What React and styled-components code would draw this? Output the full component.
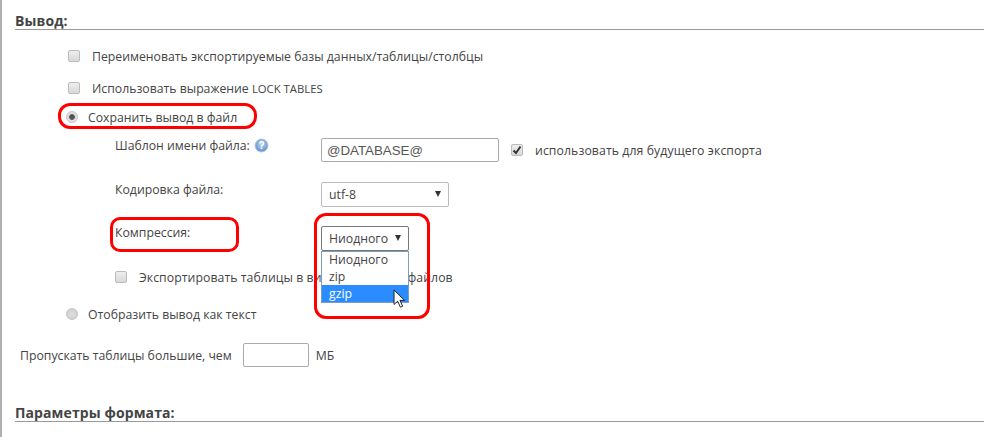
import React from "react";
import styled, { createGlobalStyle } from "styled-components";

const Global = createGlobalStyle`
  html, body { margin: 0; padding: 0; background: #fff; }
  body { font-family: "Open Sans", "Noto Sans", sans-serif; font-size: 12.25px; color: #444; }
`;

const Page = styled.div`
  position: relative;
  width: 1002px;
  height: 437px;
  box-sizing: border-box;
  overflow: hidden;
  border-left: 2px solid #b0b0b0;
  padding: 14px 18px 0 13px;
`;

const Heading = styled.h2`
  margin: ${(p) => p.$top || 0}px 0 ${(p) => p.$bottom || 0}px;
  height: 15px;
  font-size: 14px;
  line-height: 14px;
  font-weight: 700;
  color: #444;
  border-bottom: 1px solid #999;
  letter-spacing: 0.1px;
`;

const Row = styled.div`
  display: flex;
  align-items: center;
  height: ${(p) => p.$h}px;
  padding-left: ${(p) => p.$left}px;
  white-space: nowrap;
`;

const Check = styled.span`
  flex: none;
  width: 10px;
  height: 10px;
  border: 1px solid #bbb;
  border-radius: 2px;
  background: linear-gradient(#eee, #d8d8d8);
  display: inline-flex;
  align-items: center;
  justify-content: center;
  margin-left: ${(p) => p.$before || 0}px;
  margin-right: ${(p) => p.$gap}px;
`;

const Radio = styled.span`
  flex: none;
  width: 10px;
  height: 10px;
  border: 1px solid #c4c4c4;
  border-radius: 50%;
  background: radial-gradient(circle, ${(p) => (p.$on ? "#555 0, #555 2.5px, #e0e0e0 3.2px" : "#ddd 0, #ccc 100%")});
  margin-right: 10px;
`;

const Label = styled.span`
  flex: none;
  width: ${(p) => p.$w}px;
  display: flex;
  align-items: center;
  gap: 4px;
  transform: translateY(${(p) => p.$shift || 0}px);
`;

const Spaced = styled.span`
  letter-spacing: ${(p) => p.$s}px;
`;

const TextField = styled.div`
  box-sizing: border-box;
  width: ${(p) => p.$w}px;
  height: 24px;
  border: 1px solid #aaa;
  border-radius: 2px;
  background: #fff;
  padding: 0 5px;
  line-height: 23px;
  font-size: 13.3px;
  color: #555;
  font-family: "Liberation Sans", sans-serif;
`;

const SelectBox = styled.div`
  box-sizing: border-box;
  width: ${(p) => p.$w}px;
  height: 25px;
  border: 1px solid ${(p) => p.$border};
  border-radius: 2px;
  background: #fff;
  padding: 0 7px;
  display: flex;
  align-items: center;
  justify-content: space-between;
  font-size: 12.25px;
  color: #444;
`;

const Arrow = styled.span`
  width: 0;
  height: 0;
  border-left: 3.5px solid transparent;
  border-right: 3.5px solid transparent;
  border-top: 6px solid #333;
`;

const Menu = styled.div`
  position: absolute;
  left: 319px;
  top: 251px;
  width: 88px;
  height: 52px;
  box-sizing: border-box;
  border: 1px solid #7f9db9;
  background: #fff;
  z-index: 2;
`;

const MenuItem = styled.div`
  height: ${(p) => p.$h}px;
  line-height: ${(p) => p.$lh}px;
  padding-left: 7px;
  font-size: 12.25px;
  color: ${(p) => (p.$active ? "#fff" : "#444")};
  background: ${(p) => (p.$active ? "#2b8cff" : "#fff")};
`;

const Mark = styled.div`
  position: absolute;
  left: ${(p) => p.$x}px;
  top: ${(p) => p.$y}px;
  width: ${(p) => p.$w}px;
  height: ${(p) => p.$h}px;
  box-sizing: border-box;
  border: 3px solid #f00;
  border-radius: ${(p) => p.$r}px;
  z-index: 3;
`;

const Cursor = styled.svg`
  position: absolute;
  left: 391px;
  top: 289px;
  z-index: 4;
`;

const SmallCaps = styled.span`
  font-size: 11.3px;
`;

const SkipLabel = styled.span`
  margin-right: 11px;
`;

const Unit = styled.span`
  margin-left: 7px;
`;

const Help = () => (
  <svg width="15" height="15" viewBox="0 0 15 15">
    <defs>
      <radialGradient id="h" cx="50%" cy="40%" r="60%">
        <stop offset="0" stopColor="#c3d7f0" />
        <stop offset="1" stopColor="#5a8cc8" />
      </radialGradient>
    </defs>
    <circle cx="7.5" cy="7.5" r="6.5" fill="url(#h)" stroke="#b4c8e0" />
    <text x="7.5" y="11" fontSize="10" fontWeight="700" textAnchor="middle" fill="#fff" fontFamily="Liberation Sans">?</text>
  </svg>
);

export default function App() {
  return (
    <>
      <Global />
      <Page>
        <Heading $bottom={13}>Вывод:</Heading>
        <Row $h={26} $left={53}>
          <Check $gap={12} />
          Переименовать экспортируемые базы данных/таблицы/столбцы
        </Row>
        <Row $h={38} $left={53}>
          <Check $gap={12} />
          <span>Использовать выражение <SmallCaps>LOCK TABLES</SmallCaps></span>
        </Row>
        <Row $h={20} $left={51}>
          <Radio $on />
          Сохранить вывод в файл
        </Row>
        <Row $h={46} $left={100}>
          <Label $w={206} $shift={-5}>Шаблон имени файла: <Help /></Label>
          <TextField $w={178}>@DATABASE@</TextField>
          <Check $before={12} $gap={12}>
            <svg width="10" height="10" viewBox="0 0 10 10"><path d="M1.5 5.5 L4 8 L8.5 1.5" fill="none" stroke="#333" strokeWidth="2" /></svg>
          </Check>
          <Spaced $s={0.09}>использовать для будущего экспорта</Spaced>
        </Row>
        <Row $h={42} $left={100}>
          <Label $w={206} $shift={-5}>Кодировка файла:</Label>
          <SelectBox $w={128} $border="#bbb">utf-8<Arrow /></SelectBox>
        </Row>
        <Row $h={46} $left={100}>
          <Label $w={206} $shift={-6}>Компрессия:</Label>
          <SelectBox $w={88} $border="#777">Ниодного<Arrow /></SelectBox>
        </Row>
        <Row $h={32} $left={100}>
          <Check $gap={12} />
          <Spaced $s={0.065}>Экспортировать таблицы в виде отдельных файлов</Spaced>
        </Row>
        <Row $h={42} $left={51}>
          <Radio />
          Отобразить вывод как текст
        </Row>
        <Row $h={40} $left={5}>
          <SkipLabel>Пропускать таблицы большие, чем</SkipLabel>
          <TextField $w={66} />
          <Unit>МБ</Unit>
        </Row>
        <Heading $top={31}>Параметры формата:</Heading>

        <Menu>
          <MenuItem $h={16} $lh={16}>Ниодного</MenuItem>
          <MenuItem $h={17} $lh={18}>zip</MenuItem>
          <MenuItem $h={17} $lh={18} $active>gzip</MenuItem>
        </Menu>
        <Mark $x={56} $y={103} $w={199} $h={26} $r={12} />
        <Mark $x={108} $y={217} $w={129} $h={35} $r={10} />
        <Mark $x={312} $y={213} $w={116} $h={106} $r={12} />
        <Cursor width="13" height="20" viewBox="0 0 14 22">
          <path d="M1 1 L1 17 L5 13.5 L8 20 L10.5 19 L7.5 12.5 L12.5 12.5 Z" fill="#fff" stroke="#111" strokeWidth="1" />
        </Cursor>
      </Page>
    </>
  );
}
